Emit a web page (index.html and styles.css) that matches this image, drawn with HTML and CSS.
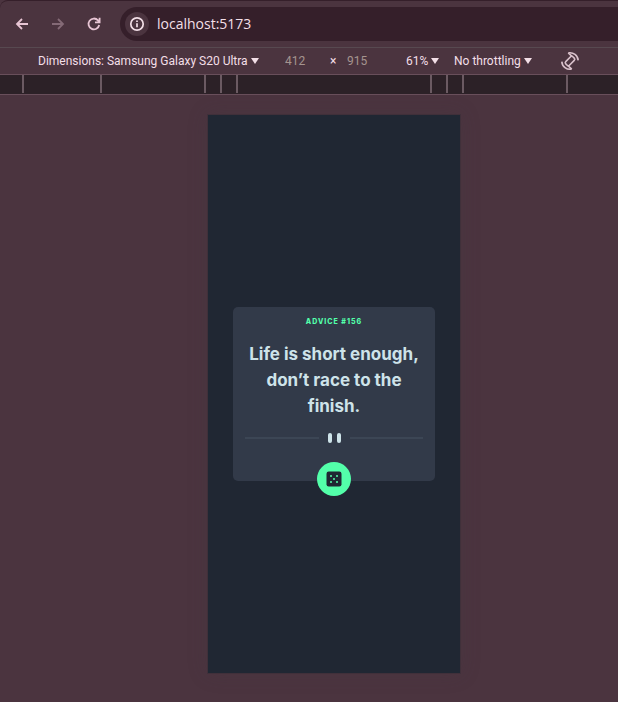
FILE: index.html
```html
<!DOCTYPE html>
<html lang="en">
<head>
<meta charset="utf-8">
<title>Advice generator</title>
<link rel="stylesheet" href="styles.css">
</head>
<body>
<header class="browser">
  <nav class="nav" aria-label="Browser">
    <button class="nav-button" aria-label="Back">
      <svg width="16" height="16" viewBox="0 0 16 16"><path d="M14 8H3M8 3 3 8 8 13"/></svg>
    </button>
    <button class="nav-button" aria-label="Forward" disabled>
      <svg width="16" height="16" viewBox="0 0 16 16"><path d="M2 8h11M8 3 13 8 8 13"/></svg>
    </button>
    <button class="nav-button" aria-label="Reload">
      <svg width="16" height="16" viewBox="0 0 16 16"><path d="M13.2 9A5.4 5.4 0 1 1 12 4.4l1.2 1.4M13.6 1.8v4.6H9"/></svg>
    </button>
  </nav>
  <div class="address">
    <button class="info" aria-label="Site information">
      <svg width="16" height="16" viewBox="0 0 16 16"><circle cx="8" cy="8" r="6.2"/><path d="M8 7.2v4M8 4.4v1.7"/></svg>
    </button>
    <input class="url" aria-label="Address" value="localhost:5173">
  </div>
</header>
<div class="device-bar">
  <button class="menu menu-device">Dimensions: Samsung Galaxy S20 Ultra <span class="caret"></span></button>
  <input class="size" aria-label="Width" value="412">
  <span class="times">×</span>
  <input class="size size-height" aria-label="Height" value="915">
  <button class="menu menu-zoom">61% <span class="caret"></span></button>
  <button class="menu menu-throttle">No throttling <span class="caret"></span></button>
  <button class="rotate" aria-label="Rotate">
    <svg width="20" height="20" viewBox="0 0 20 20"><g transform="rotate(45 10 10)"><rect x="7.4" y="5" width="5.2" height="10" rx="1.6"/></g><path d="M8.4 1.9A8.2 8.2 0 0 1 18.2 9.4M8.2 1.9l3.6 3.2M11.6 18.1A8.2 8.2 0 0 1 1.8 10.6M11.8 18.1l-3.6-3.2"/></svg>
  </button>
</div>
<div class="ruler">
  <i class="tick tick-edge"></i><i class="tick tick-tablet"></i><i class="tick tick-wide"></i><i class="tick"></i><i class="tick"></i><i class="tick tick-center"></i><i class="tick"></i><i class="tick"></i><i class="tick tick-wide"></i>
</div>
<main class="stage">
  <div class="device">
    <article class="card">
      <h1 class="label">ADVICE #156</h1>
      <p class="quote">Life is short enough, don’t race to the finish.</p>
      <div class="divider"><span class="bar"></span><span class="bar"></span></div>
      <button class="dice" aria-label="New advice">
        <svg width="16" height="16" viewBox="0 0 16 16"><rect x=".5" y=".5" width="15" height="15" rx="2.2" fill="#202733"/><g fill="#53ffaa"><circle cx="5" cy="5" r="1"/><circle cx="11" cy="5" r="1"/><circle cx="8" cy="8" r="1"/><circle cx="5" cy="11" r="1"/><circle cx="11" cy="11" r="1"/></g></svg>
      </button>
    </article>
  </div>
</main>
</body>
</html>
```
FILE: styles.css
```css
* { box-sizing: border-box; }
body {
  margin: 0;
  min-height: 100vh;
  display: flex;
  flex-direction: column;
  overflow-x: hidden;
  background: #4b343f;
  color: #f3dfe7;
  font: 12px/16px Roboto, "Open Sans", sans-serif;
}
button, input {
  margin: 0;
  padding: 0;
  border: 0;
  background: none;
  color: inherit;
  font: inherit;
}
svg { display: block; fill: none; }

.browser {
  display: flex;
  align-items: center;
  height: 48px;
  padding-left: 14px;
  border-top: 1px solid #351f2a;
  border-bottom: 1px solid #574950;
  border-top-left-radius: 8px;
}
.nav { display: flex; gap: 20px; }
.nav-button svg { stroke: #e8c5d4; stroke-width: 1.8; }
.nav-button:disabled svg { stroke: #846a76; }
.address {
  flex: 1;
  display: flex;
  align-items: center;
  gap: 8px;
  height: 34px;
  margin-left: 18px;
  padding-left: 5px;
  border-radius: 17px 0 0 17px;
  background: #351f2a;
}
.info {
  display: grid;
  place-items: center;
  width: 24px;
  height: 24px;
  border-radius: 50%;
  background: #4b343f;
}
.info svg { stroke: #f3dfe7; stroke-width: 1.7; }
.url {
  flex: 1;
  min-width: 0;
  font-family: "Open Sans", "Noto Sans", sans-serif;
  font-size: 14px;
  line-height: 20px;
}

.device-bar {
  display: flex;
  align-items: center;
  height: 27px;
  padding-left: 38px;
  border-bottom: 1px solid #694f5b;
  white-space: nowrap;
}
.menu { display: flex; align-items: center; gap: 3px; margin-right: 13px; }
.menu-device { width: 222px; margin-right: 25px; }
.menu-zoom { width: 35px; }
.menu-throttle { width: 84px; }
.caret {
  border: solid transparent;
  border-width: 6px 4px 0;
  border-top-color: #f3dfe7;
}
.size { width: 45px; color: #a5948f; }
.size-height { width: 59px; }
.times { width: 17px; }
.rotate { margin-left: 9px; }
.rotate svg { stroke: #d9c1cb; stroke-width: 1.6; }

.ruler {
  display: flex;
  height: 20px;
  padding-bottom: 1px;
  background: #2c2127;
  border-bottom: 1px solid #694f5b;
}
.tick { flex: none; width: 16px; border-right: 2px solid #6b5a62; }
.tick-edge { width: 24px; }
.tick-tablet { width: 78px; }
.tick-wide { width: 104px; }
.tick-center { width: 194px; }

.stage { flex: 1; display: flex; justify-content: center; padding: 19px 0 28px 50px; }
.device {
  flex: none;
  display: grid;
  align-items: center;
  width: 254px;
  padding: 0 25px;
  border: 1px solid #40303a;
  background: #202733;
  box-shadow: 0 0 18px #4339423d;
}
.card {
  display: flex;
  flex-direction: column;
  align-items: center;
  padding: 10px 12px 0;
  border-radius: 5px;
  background: #323a49;
  font-family: Inter, "Open Sans", sans-serif;
}
.label {
  margin: 0;
  color: #53ffaa;
  font-size: 7px;
  line-height: 10px;
  font-weight: 800;
  letter-spacing: 1px;
}
.quote {
  margin: 14px 0;
  color: #cee3e9;
  font-size: 17px;
  line-height: 26px;
  font-weight: 700;
  text-align: center;
}
.divider { display: flex; align-items: center; gap: 5px; width: 100%; }
.divider::before, .divider::after {
  content: "";
  flex: 1;
  height: 2px;
  background: #3c4655;
}
.divider::before { margin-right: 4px; }
.divider::after { margin-left: 4px; }
.bar { width: 4px; height: 10px; border-radius: 2px; background: #cee3e9; }
.dice {
  display: grid;
  place-items: center;
  width: 34px;
  height: 34px;
  margin: 19px 0 -15px;
  border-radius: 50%;
  background: #53ffaa;
}
```
